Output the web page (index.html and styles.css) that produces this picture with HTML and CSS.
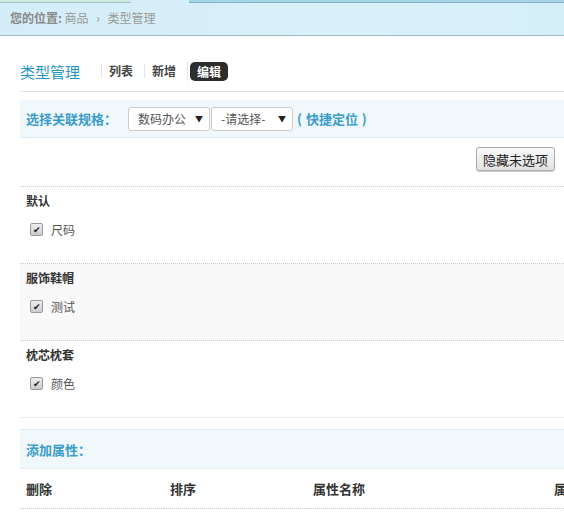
FILE: index.html
```html
<!DOCTYPE html>
<html lang="zh-CN">
<head>
    <meta charset="UTF-8">
    <title>类型管理</title>
    <link rel="stylesheet" href="styles.css">
</head>
<body>

    <div class="tabs">
        <span class="tab tab-left"></span>
        <span class="tab tab-gap"></span>
        <span class="tab tab-right"></span>
    </div>
    <div class="crumb">
        <b>您的位置:</b> 商品 <span class="arrow">›</span> 类型管理
    </div>

    <div class="main">
        <div class="head">
            <h2>类型管理</h2>
            <a class="nav">列表</a>
            <a class="nav">新增</a>
            <a class="nav cur"><span class="pill">编辑</span></a>
        </div>

        <div class="bar">
            <span class="bar-title">选择关联规格：</span>
            <span class="pick">数码办公<i>▼</i></span>
            <span class="pick">-请选择-<i>▼</i></span>
            <span class="quick">( 快捷定位 )</span>
        </div>

        <div class="tools">
            <button class="btn">隐藏未选项</button>
        </div>

        <div class="group">
            <h4>默认</h4>
            <label class="check"><span class="box">✔</span>尺码</label>
        </div>
        <div class="group alt">
            <h4>服饰鞋帽</h4>
            <label class="check"><span class="box">✔</span>测试</label>
        </div>
        <div class="group last">
            <h4>枕芯枕套</h4>
            <label class="check"><span class="box">✔</span>颜色</label>
        </div>

        <div class="bar bar-add">
            <span class="bar-title">添加属性：</span>
        </div>

        <table class="attrs">
            <tr>
                <th class="c1">删除</th>
                <th class="c2">排序</th>
                <th class="c3">属性名称</th>
                <th>属性值</th>
            </tr>
        </table>
    </div>

</body>
</html>
```

FILE: styles.css
```css
body {
    margin: 0;
    font-family: "Microsoft YaHei", "Noto Sans CJK SC", sans-serif;
    font-size: 12px;
    color: #333;
    background: #fff;
    overflow: hidden;
}
.tabs {
    display: flex;
    height: 3px;
    background: #d6eef9;
}
.tab {
    height: 2px;
}
.tab-left {
    width: 131px;
    background: #cfe9e4;
    border-bottom: 1px solid #9cc7c0;
}
.tab-gap {
    width: 58px;
}
.tab-right {
    flex: 1;
    background: #a9d4e4;
    border-bottom: 1px solid #7fb3c5;
}
.crumb {
    height: 32px;
    line-height: 30px;
    padding-left: 10px;
    background: linear-gradient(to right, #d4edf8, #daf0f9 60%, #d5eff9);
    border-bottom: 1px solid #9dbcc6;
    color: #999;
    font-size: 12px;
}
.crumb b {
    color: #888;
}
.crumb .arrow {
    margin: 0 5px;
}
.main {
    padding-left: 20px;
}
.head {
    display: flex;
    align-items: center;
    height: 56px;
    padding-top: 15px;
    box-sizing: border-box;
    border-bottom: 1px solid #e0e6e8;
}
.head h2 {
    margin: 0 21px 0 0;
    font-size: 15px;
    font-weight: normal;
    color: #2595c2;
}
.nav {
    font-weight: bold;
    color: #444;
    padding-left: 7px;
    margin-right: 11px;
    border-left: 1px solid #e5e5e5;
    line-height: 14px;
}
.nav.cur {
    padding-left: 2px;
}
.pill {
    display: inline-block;
    padding: 0 7px 0 7px;
    background: #2d2d2d;
    color: #fff;
    border-radius: 5px;
    line-height: 19px;
}
.bar {
    display: flex;
    align-items: center;
    height: 37px;
    margin-top: 8px;
    padding-left: 6px;
    background: #f0f8fc;
    border-bottom: 1px solid #e0edf3;
}
.bar-title {
    color: #3a9ccc;
    font-size: 13px;
    font-weight: bold;
    margin-right: 11px;
}
.pick {
    display: flex;
    justify-content: space-between;
    align-items: center;
    box-sizing: border-box;
    width: 82px;
    height: 24px;
    margin-right: 1px;
    padding: 0 6px 0 9px;
    border: 1px solid #ccc;
    border-radius: 3px;
    background: #fff;
    color: #555;
    font-size: 12px;
}
.pick i {
    font-style: normal;
    font-size: 8px;
    color: #222;
}
.quick {
    color: #3a9ccc;
    font-size: 13px;
    font-weight: bold;
    margin-left: 3px;
    word-spacing: 1px;
}
.tools {
    display: flex;
    justify-content: flex-end;
    padding: 9px 9px 15px 0;
    border-bottom: 1px dotted #ccc;
}
.btn {
    font-family: inherit;
    font-size: 13px;
    color: #222;
    height: 24px;
    padding: 0 6px;
    border: 1px solid #aaa;
    border-radius: 3px;
    background: linear-gradient(#fafafa, #e2e2e2);
    box-shadow: 0 1px 1px rgba(0, 0, 0, 0.2);
}
.group {
    height: 77px;
    padding: 5px 0 0 6px;
    box-sizing: border-box;
    border-bottom: 1px dotted #ccc;
}
.group.alt {
    background: #f9f9f9;
}
.group.last {
    border-bottom: 1px solid #e3eef3;
}
.group h4 {
    margin: 0;
    font-size: 12px;
    line-height: 17px;
    color: #333;
}
.check {
    display: flex;
    align-items: center;
    margin-top: 12px;
    padding-left: 4px;
    color: #555;
    font-size: 12px;
}
.box {
    display: inline-block;
    width: 11px;
    height: 11px;
    margin-right: 8px;
    border: 1px solid #999;
    border-radius: 2px;
    background: linear-gradient(#eee, #ccc);
    color: #222;
    font-size: 9px;
    line-height: 11px;
    text-align: center;
}
.bar-add {
    margin-top: 11px;
    height: 38px;
    border-top: 1px solid #e0edf3;
}
.attrs {
    width: 720px;
    border-collapse: collapse;
}
.attrs th {
    text-align: left;
    font-size: 13px;
    color: #333;
    height: 39px;
    padding: 0 6px;
    border-bottom: 1px dotted #ccc;
}
.attrs .c1 {
    width: 132px;
}
.attrs .c2 {
    width: 131px;
}
.attrs .c3 {
    width: 229px;
}
```
